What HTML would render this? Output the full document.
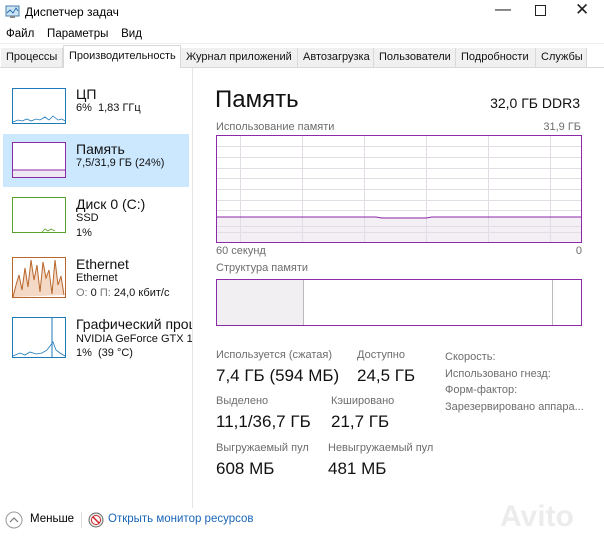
<!DOCTYPE html>
<html><head><meta charset="utf-8"><style>
*{margin:0;padding:0;box-sizing:border-box}
body{width:604px;height:540px;background:#fff;font-family:"Liberation Sans","DejaVu Sans",sans-serif;position:relative;overflow:hidden;color:#000}
.a{position:absolute;white-space:nowrap}
.g{color:#6d6d6d;font-size:11px}
.v{font-size:17px;color:#111}
.tab{position:absolute;top:48px;height:19px;font-size:11px;padding:3px 0 0 5px;background:#f0f0f0;border-right:1px solid #d9d9d9;color:#111;overflow:hidden}
.sb{font-size:11px;color:#111}
.st{font-size:14px;color:#111}
</style></head><body>
<svg class="a" style="left:5px;top:5px" width="16" height="14"><rect x="1" y="1" width="13" height="10" fill="#cde4f5" stroke="#4a7ca8"/><polyline points="2,8 5,5 8,8 11,3 13,6" fill="none" stroke="#2a6fb0"/><rect x="5" y="11" width="5" height="2" fill="#888"/></svg>
<div class="a" style="left:25px;top:5px;font-size:12px">Диспетчер задач</div>
<div class="a" style="left:495px;top:1px;font-size:16px;color:#222">—</div>
<div class="a" style="left:535px;top:5px;width:11px;height:11px;border:1px solid #222"></div>
<div class="a" style="left:575px;top:0px;font-size:17px;color:#222">✕</div>
<div class="a" style="left:6px;top:28px;font-size:11.5px">Файл&nbsp;&nbsp;&nbsp; Параметры&nbsp;&nbsp;&nbsp; Вид</div>
<div class="a" style="left:0;top:43px;width:604px;height:1px;background:#eee"></div>
<div class="a" style="left:0;top:67px;width:604px;height:1px;background:#d9d9d9"></div>
<div class="tab" style="left:1px;width:62px">Процессы</div>
<div class="tab" style="left:63px;top:45px;height:23px;width:118px;background:#fff;border:1px solid #d9d9d9;border-bottom:none;padding-top:4px">Производительность</div>
<div class="tab" style="left:181px;width:117px">Журнал приложений</div>
<div class="tab" style="left:298px;width:76px">Автозагрузка</div>
<div class="tab" style="left:374px;width:82px">Пользователи</div>
<div class="tab" style="left:456px;width:80px">Подробности</div>
<div class="tab" style="left:536px;width:51px">Службы</div>
<div class="a" style="left:192px;top:68px;width:1px;height:440px;background:#e5e5e5"></div>
<div class="a" style="left:3px;top:134px;width:186px;height:53px;background:#cce8ff"></div>
<svg class="a" style="left:0;top:80px" width="192" height="300">
<rect x="12.5" y="8.5" width="53" height="35" fill="#fff" stroke="#1e7ab8"/>
<polyline points="13,42 18,40 22,41 27,39 31,41 36,39 40,40 45,37 49,40 53,36 58,40 62,39 65,41" fill="none" stroke="#1e7ab8" stroke-width=".8"/>
<rect x="12.5" y="62.5" width="53" height="35" fill="#fff" stroke="#8b2aa7"/>
<rect x="13" y="90" width="52" height="7" fill="#efe8f2"/><line x1="13" y1="90" x2="65" y2="90" stroke="#8b2aa7"/>
<rect x="12.5" y="117.5" width="53" height="35" fill="#fff" stroke="#5aa02c"/>
<polyline points="42,152 45,149 48,151 51,149 55,151" fill="none" stroke="#5aa02c" stroke-width=".8"/>
<rect x="12.5" y="177.5" width="53" height="40" fill="#fff" stroke="#b8662a"/>
<polyline points="13,217 16,205 19,195 22,210 25,188 28,207 31,180 34,200 37,185 40,212 43,182 46,198 49,190 52,214 55,180 58,205 61,196 64,215" fill="#f3d9c6" stroke="#b8662a"/>
<rect x="12.5" y="237.5" width="53" height="40" fill="#fff" stroke="#1e7ab8"/>
<line x1="52" y1="238" x2="52" y2="277" stroke="#1e7ab8"/>
<polyline points="13,276 20,273 25,275 30,272 36,274 42,273 47,270 50,266 53,262 56,270 60,273 65,276" fill="none" stroke="#1e7ab8" stroke-width=".8"/>
</svg>
<div class="a st" style="left:76px;top:86px">ЦП</div><div class="a sb" style="left:76px;top:102px">6%&nbsp; 1,83 ГГц</div>
<div class="a st" style="left:76px;top:141px">Память</div><div class="a sb" style="left:76px;top:157px">7,5/31,9 ГБ (24%)</div>
<div class="a st" style="left:76px;top:196px">Диск 0 (C:)</div><div class="a sb" style="left:76px;top:212px">SSD</div><div class="a sb" style="left:76px;top:227px">1%</div>
<div class="a st" style="left:76px;top:256px">Ethernet</div><div class="a sb" style="left:76px;top:272px">Ethernet</div><div class="a sb" style="left:76px;top:287px"><span style="color:#777">О:</span> 0 <span style="color:#777">П:</span> 24,0 кбит/с</div>
<div class="a" style="left:76px;top:316px;width:116px;overflow:hidden"><div class="st">Графический процессор</div><div class="sb" style="margin-top:1px">NVIDIA GeForce GTX 1660</div><div class="sb" style="margin-top:2px">1%&nbsp; (39 °C)</div></div>
<div class="a" style="left:215px;top:86px;font-size:24px;color:#111">Память</div>
<div class="a" style="right:24px;top:95px;font-size:14px;color:#111">32,0 ГБ DDR3</div>
<div class="a g" style="left:216px;top:121px">Использование памяти</div>
<div class="a g" style="right:23px;top:121px">31,9 ГБ</div>
<svg class="a" style="left:216px;top:135px" width="366" height="108">
<rect x="0" y="82" width="366" height="26" fill="#f3eff5"/>
<g stroke="#e2dde5" stroke-width="1">
<line x1="24.5" y1="0" x2="24.5" y2="108"/><line x1="86.5" y1="0" x2="86.5" y2="108"/><line x1="148.5" y1="0" x2="148.5" y2="108"/><line x1="210.5" y1="0" x2="210.5" y2="108"/><line x1="272.5" y1="0" x2="272.5" y2="108"/><line x1="334.5" y1="0" x2="334.5" y2="108"/>
<line x1="0" y1="11.5" x2="366" y2="11.5"/><line x1="0" y1="22.5" x2="366" y2="22.5"/><line x1="0" y1="33.5" x2="366" y2="33.5"/><line x1="0" y1="43.5" x2="366" y2="43.5"/><line x1="0" y1="54.5" x2="366" y2="54.5"/><line x1="0" y1="65.5" x2="366" y2="65.5"/><line x1="0" y1="75.5" x2="366" y2="75.5"/><line x1="0" y1="91.5" x2="366" y2="91.5"/><line x1="0" y1="97.5" x2="366" y2="97.5"/>
</g>
<polyline points="0,82 160,82 166,83 210,83 216,82 366,82" fill="none" stroke="#8b2aa7" stroke-width="1"/>
<rect x=".5" y=".5" width="365" height="107" fill="none" stroke="#8b2aa7"/>
</svg>
<div class="a g" style="left:216px;top:245px">60 секунд</div>
<div class="a g" style="right:22px;top:245px">0</div>
<div class="a g" style="left:216px;top:262px">Структура памяти</div>
<svg class="a" style="left:216px;top:279px" width="366" height="47">
<rect x="0" y="0" width="87" height="47" fill="#f1eff2"/>
<line x1="87.5" y1="0" x2="87.5" y2="47" stroke="#bbb"/><line x1="336.5" y1="0" x2="336.5" y2="47" stroke="#bbb"/>
<rect x=".5" y=".5" width="365" height="46" fill="none" stroke="#8b2aa7"/>
</svg>
<div class="a g" style="left:216px;top:349px">Используется (сжатая)</div>
<div class="a v" style="left:216px;top:366px">7,4 ГБ (594 МБ)</div>
<div class="a g" style="left:357px;top:349px">Доступно</div>
<div class="a v" style="left:357px;top:366px">24,5 ГБ</div>
<div class="a g" style="left:216px;top:395px">Выделено</div>
<div class="a v" style="left:216px;top:412px">11,1/36,7 ГБ</div>
<div class="a g" style="left:331px;top:395px">Кэшировано</div>
<div class="a v" style="left:331px;top:412px">21,7 ГБ</div>
<div class="a g" style="left:216px;top:442px">Выгружаемый пул</div>
<div class="a v" style="left:216px;top:459px">608 МБ</div>
<div class="a g" style="left:328px;top:442px">Невыгружаемый пул</div>
<div class="a v" style="left:328px;top:459px">481 МБ</div>
<div class="a g" style="left:445px;top:349px;line-height:16.5px">Скорость:<br>Использовано гнезд:<br>Форм-фактор:<br>Зарезервировано аппара...</div>
<svg class="a" style="left:5px;top:511px" width="18" height="18"><circle cx="9" cy="9" r="8" fill="#fff" stroke="#999"/><polyline points="5,11 9,7 13,11" fill="none" stroke="#777" stroke-width="1.2"/></svg>
<div class="a" style="left:30px;top:513px;font-size:11.5px">Меньше</div>
<div class="a" style="left:81px;top:512px;width:1px;height:16px;background:#ddd"></div>
<svg class="a" style="left:88px;top:512px" width="16" height="16"><circle cx="8" cy="8" r="7" fill="#eee" stroke="#666"/><circle cx="8" cy="8" r="4.5" fill="#fff" stroke="#c22"/><line x1="5" y1="5" x2="11" y2="11" stroke="#c22" stroke-width="1.5"/></svg>
<div class="a" style="left:108px;top:513px;font-size:11.5px;color:#1a66b8">Открыть монитор ресурсов</div>
<div class="a" style="left:500px;top:500px;font-size:30px;font-weight:bold;color:rgba(200,200,200,.35)">Avito</div>
</body></html>
